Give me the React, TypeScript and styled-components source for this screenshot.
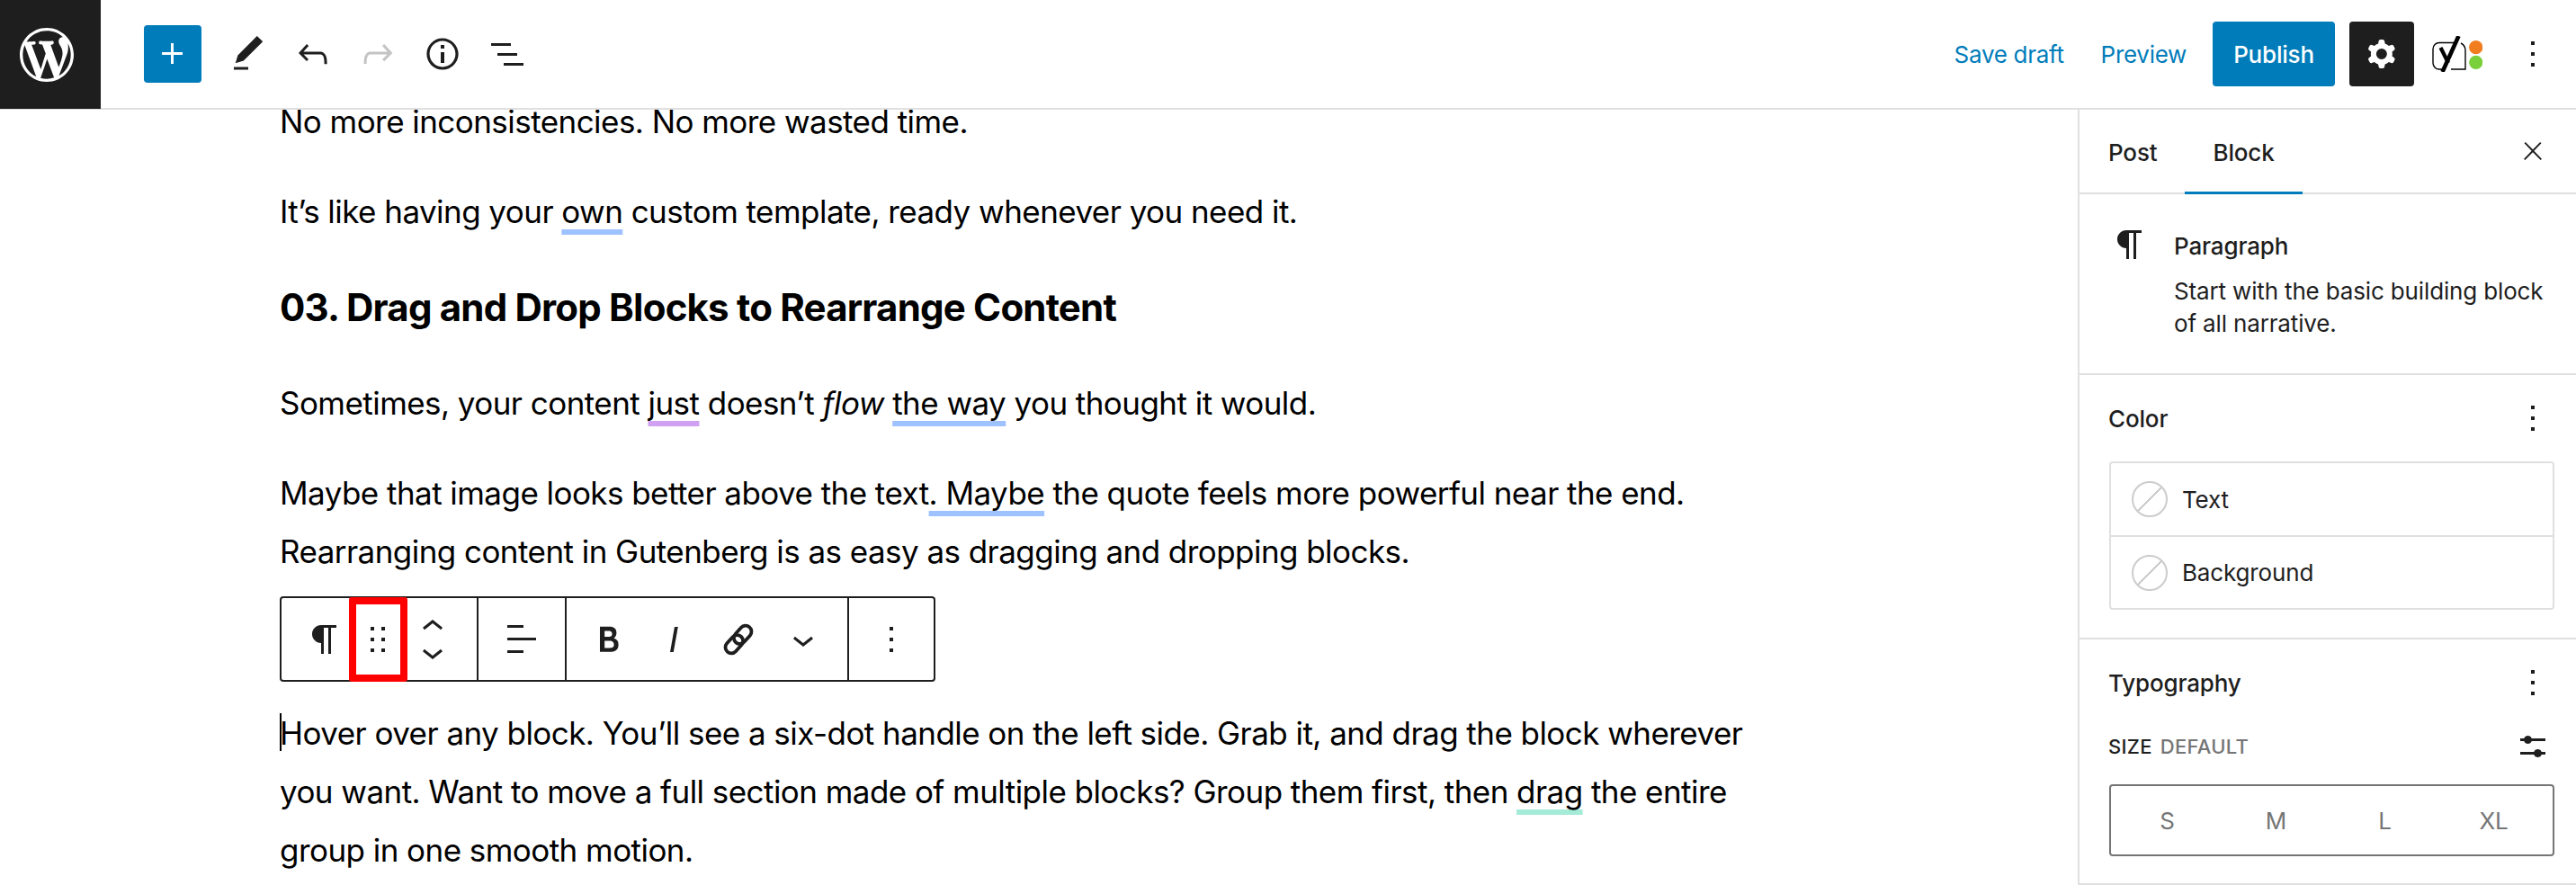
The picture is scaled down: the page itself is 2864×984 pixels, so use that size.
import React from "react";
import styled, { createGlobalStyle } from "styled-components";

const Global = createGlobalStyle`
  html, body { margin: 0; padding: 0; background: #fff; }
  * { box-sizing: border-box; }
  body { font-family: Inter, "Liberation Sans", sans-serif; -webkit-font-smoothing: antialiased; }
`;

const Page = styled.div`
  width: 2864px;
  height: 984px;
  display: flex;
  flex-direction: column;
  overflow: hidden;
  color: #1e1e1e;
`;
const Header = styled.header`
  height: 122px;
  flex: none;
  display: flex;
  align-items: stretch;
  border-bottom: 2px solid #e0e0e0;
`;
const Logo = styled.div`
  width: 112px;
  height: 121px;
  flex: none;
  background: #1e1e1e;
  color: #fff;
  display: flex;
  align-items: center;
  justify-content: center;
  svg { margin-left: -8px; }
`;
const Tools = styled.div`
  display: flex;
  align-items: center;
  padding-left: 48px;
  flex: 1;
`;
const Inserter = styled.button`
  width: 64px;
  height: 64px;
  border: 0;
  border-radius: 4px;
  background: #007cba;
  color: #fff;
  padding: 0;
  display: flex;
  align-items: center;
  justify-content: center;
  margin-right: 16px;
`;
const ToolIcon = styled.span<{ $muted?: boolean }>`
  width: 72px;
  height: 72px;
  display: flex;
  align-items: center;
  justify-content: center;
  color: ${(p) => (p.$muted ? "#c4c4c4" : "#1e1e1e")};
`;
const Actions = styled.div`
  display: flex;
  align-items: center;
  padding-right: 24px;
`;
const LinkBtn = styled.span`
  font-size: 26px;
  letter-spacing: -0.3px;
  color: #007cba;
  margin-right: 41px;
`;
const Publish = styled.button`
  width: 136px;
  height: 72px;
  border: 0;
  border-radius: 4px;
  background: #007cba;
  color: #fff;
  font: 500 26px Inter, sans-serif;
  letter-spacing: -0.2px;
  margin-left: -12px;
  margin-right: 16px;
`;
const Gear = styled.button`
  width: 72px;
  height: 72px;
  border: 0;
  border-radius: 4px;
  background: #1e1e1e;
  color: #fff;
  padding: 0;
  display: flex;
  align-items: center;
  justify-content: center;
  margin-right: 20px;
`;
const Kebab = styled.span`
  display: flex;
  width: 48px;
  height: 48px;
  align-items: center;
  justify-content: center;
  color: #1e1e1e;
`;
const YoastWrap = styled.span`
  display: flex;
  margin-right: 32px;
`;
const Body = styled.div`
  flex: 1;
  display: flex;
  min-height: 0;
`;
const Canvas = styled.main`
  flex: 1;
  overflow: hidden;
  padding-left: 311px;
  color: #000;
`;
const Flow = styled.div`
  width: 1640px;
  margin-top: -19px;
`;
const P = styled.p`
  margin: 0 0 35px;
  font-size: 35px;
  line-height: 65px;
  letter-spacing: -0.55px;
  position: relative;
`;
const H = styled.h3`
  margin: 44px 0 44px;
  font-size: 42px;
  line-height: 60px;
  font-weight: 700;
  letter-spacing: -0.8px;
`;
const Mark = styled.span<{ $c: string }>`
  text-decoration: underline;
  text-decoration-color: ${(p) => p.$c};
  text-decoration-thickness: 6px;
  text-underline-offset: 7px;
  text-decoration-skip-ink: none;
`;
const Caret = styled.span`
  position: absolute;
  left: 0;
  top: 10px;
  width: 2px;
  height: 42px;
  background: #000;
`;
const BlockBar = styled.div`
  position: relative;
  width: 729px;
  height: 95px;
  border: 2px solid #1e1e1e;
  border-radius: 4px;
  display: flex;
  margin: -18px 0 25px;
  background: #fff;
  color: #1e1e1e;
`;
const Group = styled.div<{ $w: number; $pad?: string; $last?: boolean }>`
  width: ${(p) => p.$w}px;
  flex: none;
  display: flex;
  align-items: center;
  padding: ${(p) => p.$pad ?? "0"};
  border-right: ${(p) => (p.$last ? "0" : "2px solid #1e1e1e")};
  justify-content: ${(p) => (p.$pad ? "flex-start" : "center")};
`;
const BarBtn = styled.span<{ $w: number }>`
  width: ${(p) => p.$w}px;
  flex: none;
  display: flex;
  align-items: center;
  justify-content: center;
`;
const ParaBtn = styled(BarBtn)`
  padding-left: 12px;
`;
const Mover = styled.span`
  width: 74px;
  flex: none;
  display: flex;
  flex-direction: column;
  align-items: center;
  svg { display: block; }
  svg + svg { margin-top: -20px; }
`;
const RedBox = styled.span`
  position: absolute;
  left: 75px;
  top: -1px;
  width: 65px;
  height: 94px;
  border: 8px solid #fe0000;
  border-radius: 3px;
  pointer-events: none;
`;
const Sidebar = styled.aside`
  width: 554px;
  flex: none;
  border-left: 2px solid #e0e0e0;
  border-bottom: 2px solid #e0e0e0;
  font-size: 26px;
  letter-spacing: -0.15px;
`;
const Tabs = styled.div`
  height: 94px;
  display: flex;
  align-items: stretch;
  border-bottom: 2px solid #e0e0e0;
  padding-left: 32px;
  position: relative;
`;
const Tab = styled.span<{ $active?: boolean }>`
  display: flex;
  align-items: center;
  font-weight: 500;
  padding: 0 ${(p) => (p.$active ? "31px" : "31px")} 0 ${(p) => (p.$active ? "31px" : "0")};
  height: 94px;
  box-shadow: ${(p) => (p.$active ? "inset 0 -3px 0 #007cba" : "none")};
`;
const CloseBtn = styled.span`
  margin-left: auto;
  width: 48px;
  display: flex;
  align-items: center;
  justify-content: center;
  margin-right: 24px;
`;
const Section = styled.section<{ $h?: number }>`
  height: ${(p) => (p.$h ? `${p.$h}px` : "auto")};
  border-bottom: ${(p) => (p.$h ? "2px solid #e0e0e0" : "0")};
  padding: 24px 24px 0 32px;
`;
const CardSection = styled(Section)`
  padding-top: 32px;
`;
const BlockCard = styled.div`
  display: flex;
`;
const CardIcon = styled.span`
  width: 73px;
  flex: none;
`;
const CardTitle = styled.div`
  font-weight: 500;
  line-height: 36px;
  margin-top: 8px;
  margin-bottom: 14px;
`;
const CardText = styled.div`
  line-height: 36px;
  width: 420px;
`;
const SectionHead = styled.div`
  display: flex;
  align-items: center;
  justify-content: space-between;
  height: 48px;
  font-weight: 500;
`;
const HeadKebab = styled.span`
  display: flex;
`;
const ColorBox = styled.div`
  border: 2px solid #e0e0e0;
  border-radius: 4px;
  margin-top: 24px;
  margin-left: 1px;
  width: 495px;
`;
const ColorRow = styled.div`
  height: 80px;
  display: flex;
  align-items: center;
  padding-left: 23px;
  gap: 16px;
  & + & { border-top: 2px solid #e0e0e0; height: 81px; }
`;
const Swatch = styled.span`
  width: 40px;
  height: 40px;
  border-radius: 50%;
  border: 2px solid #ccc;
  background: linear-gradient(to bottom right, transparent calc(50% - 1px), #ccc calc(50% - 1px), #ccc calc(50% + 1px), transparent calc(50% + 1px));
  flex: none;
`;
const SizeRow = styled.div`
  display: flex;
  align-items: center;
  justify-content: space-between;
  margin-top: 23px;
  height: 48px;
  font-size: 22px;
  font-weight: 500;
  text-transform: uppercase;
`;
const SizeLabel = styled.span`
  display: flex;
  gap: 9px;
  letter-spacing: 0.3px;
`;
const SizeValue = styled.span`
  color: #757575;
`;
const Toggle = styled.div`
  width: 495px;
  height: 80px;
  margin-top: 18px;
  margin-left: 1px;
  border: 2px solid #757575;
  border-radius: 4px;
  display: grid;
  grid-template-columns: repeat(4, 121px);
  padding-left: 2px;
  align-items: center;
  justify-items: center;
  color: #757575;
`;

const Svg = ({ d, size = 48, vb = "0 0 24 24" }: { d: string | string[]; size?: number; vb?: string }) => (
  <svg width={size} height={size} viewBox={vb} fill="currentColor" aria-hidden="true">
    {(Array.isArray(d) ? d : [d]).map((x, i) => (
      <path key={i} d={x} fillRule="evenodd" clipRule="evenodd" />
    ))}
  </svg>
);

const I = {
  wp: "M20 10c0-5.51-4.5-10-10-10C4.48 0 0 4.49 0 10c0 5.52 4.48 10 10 10 5.5 0 10-4.48 10-10zM7.78 15.37L4.37 6.22c.55-.02 1.17-.08 1.17-.08.5-.06.44-1.13-.06-1.11 0 0-1.45.11-2.37.11-.18 0-.37 0-.58-.01C4.12 2.69 6.87 1.11 10 1.11c2.33 0 4.45.87 6.05 2.34-.68-.11-1.65.39-1.65 1.58 0 .74.45 1.36.9 2.1.35.61.55 1.36.55 2.46 0 1.49-1.4 5-1.4 5l-3.03-8.37c.54-.02.82-.17.82-.17.5-.05.44-1.25-.06-1.22 0 0-1.44.12-2.38.12-.87 0-2.33-.12-2.33-.12-.5-.03-.56 1.25-.06 1.22l.92.08 1.26 3.41zM17.41 10c.24-.64.74-1.87.43-4.25.7 1.29 1.05 2.71 1.05 4.25 0 3.29-1.73 6.24-4.4 7.78.97-2.59 1.94-5.2 2.92-7.78zM6.1 18.09C3.12 16.65 1.11 13.53 1.11 10c0-1.3.23-2.48.72-3.59C3.25 10.3 4.67 14.2 6.1 18.09zm4.03-6.63l2.58 6.98c-.86.29-1.76.45-2.71.45-.79 0-1.57-.11-2.29-.33.81-2.38 1.62-4.74 2.42-7.1z",
  plus: "M11 12.5V17.5H12.5V12.5H17.5V11H12.5V6H11V11H6V12.5H11Z",
  pencil: "M20.1 5.1L16.9 2 6.2 12.7l-1.3 4.4 4.5-1.3L20.1 5.1zM4 20.8h8v-1.5H4v1.5z",
  undo: "M18.3 11.7c-.6-.6-1.4-.9-2.3-.9H6.7l2.9-3.3-1.1-1-4.5 5L8.5 16l1-1-2.7-2.7H16c.5 0 .9.2 1.3.5 1 1 1 3.4 1 4.5v.3h1.5v-.2c0-1.5 0-4.3-1.5-5.7z",
  redo: "M15.6 6.5l-1.1 1 2.9 3.3H8c-.9 0-1.7.3-2.3.9-1.4 1.5-1.4 4.2-1.4 5.6v.2h1.5v-.3c0-1.1 0-3.5 1-4.5.3-.3.7-.5 1.3-.5h9.2L14.5 15l1.1 1.1 4.6-4.6-4.6-5z",
  info: "M12 3.2c-4.8 0-8.8 3.9-8.8 8.8 0 4.8 3.9 8.8 8.8 8.8 4.8 0 8.8-3.9 8.8-8.8 0-4.8-4-8.8-8.8-8.8zm0 16c-4 0-7.2-3.3-7.2-7.2C4.8 8 8 4.8 12 4.8s7.2 3.3 7.2 7.2c0 4-3.2 7.2-7.2 7.2zM11 17h2v-6h-2v6zm0-8h2V7h-2v2z",
  list: "M3 6h11v1.5H3V6Zm3.5 5.5h11V13h-11v-1.5ZM21 17H10v1.5h11V17Z",
  para: "m9.99609 14v-.2251l.00391.0001v6.225h1.5v-14.5h2.5v14.5h1.5v-14.5h3v-1.5h-8.50391c-2.76142 0-5 2.23858-5 5 0 2.7614 2.23858 5 5 5z",
  drag: "M8 7h2V5H8v2zm0 6h2v-2H8v2zm0 6h2v-2H8v2zm6-14v2h2V5h-2zm0 8h2v-2h-2v2zm0 6h2v-2h-2v2z",
  up: "M6.5 12.4L12 8l5.5 4.4-.9 1.2L12 10l-4.5 3.6-1-1.2z",
  down: "M17.5 11.6L12 16l-5.5-4.4.9-1.2L12 14l4.5-3.6 1 1.2z",
  align: "M13 5.5H4V4h9v1.5Zm7 7H4V11h16v1.5Zm-7 7H4V18h9v1.5Z",
  bold: "M14.7 11.3c1-.6 1.5-1.6 1.5-3 0-2.3-1.3-3.4-4-3.4H7v14h5.8c1.4 0 2.5-.3 3.3-1 .8-.7 1.2-1.7 1.2-2.9.1-1.9-.8-3.1-2.6-3.7zm-5.1-4h2.3c.6 0 1.1.1 1.4.4.3.3.5.7.5 1.2s-.2 1-.5 1.2c-.3.3-.8.4-1.4.4H9.6V7.3zm4.6 9c-.4.3-1 .4-1.7.4H9.6v-3.9h2.9c.7 0 1.3.2 1.7.6.4.4.6.8.6 1.5s-.2 1.2-.6 1.4z",
  italic: "M12.5 5L10 19h1.9l2.5-14z",
  more: "M13 19h-2v-2h2v2zm0-6h-2v-2h2v2zm0-6h-2V5h2v2z",
  cog: "M10.289 4.836A1 1 0 0 1 11.275 4h1.306a1 1 0 0 1 .987.836l.244 1.466c.787.26 1.503.679 2.108 1.218l1.393-.522a1 1 0 0 1 1.216.437l.653 1.13a1 1 0 0 1-.23 1.273l-1.148.944a6.025 6.025 0 0 1 0 2.435l1.149.946a1 1 0 0 1 .23 1.272l-.653 1.13a1 1 0 0 1-1.216.437l-1.394-.522c-.605.54-1.32.958-2.108 1.218l-.244 1.466a1 1 0 0 1-.987.836h-1.306a1 1 0 0 1-.986-.836l-.244-1.466a5.995 5.995 0 0 1-2.108-1.218l-1.394.522a1 1 0 0 1-1.217-.436l-.653-1.131a1 1 0 0 1 .23-1.272l1.149-.946a6.026 6.026 0 0 1 0-2.435l-1.148-.944a1 1 0 0 1-.23-1.272l.653-1.131a1 1 0 0 1 1.217-.437l1.393.522a5.994 5.994 0 0 1 2.108-1.218l.244-1.466ZM14.929 12a3 3 0 1 1-6 0 3 3 0 0 1 6 0Z",
  close: "M13 11.8l6.1-6.3-1-1-6.1 6.2-6.1-6.2-1 1 6.1 6.3-6.5 6.7 1 1 6.5-6.6 6.5 6.6 1-1z",
  sliders: [
    "m19 7.5h-7.628c-.3089-.87389-1.1423-1.5-2.122-1.5-.97966 0-1.81309.62611-2.12197 1.5h-2.12803v1.5h2.12803c.30888.87389 1.14231 1.5 2.12197 1.5.9797 0 1.8131-.62611 2.122-1.5h7.628z",
    "m19 15h-2.128c-.3089-.8739-1.1423-1.5-2.122-1.5s-1.8131.6261-2.122 1.5h-7.628v1.5h7.628c.3089.8739 1.1423 1.5 2.122 1.5s1.8131-.6261 2.122-1.5h2.128z",
  ],
};

const LinkIcon = () => (
  <svg width="48" height="48" viewBox="0 0 24 24" fill="none" stroke="currentColor" strokeWidth="1.9" aria-hidden="true">
    <g transform="rotate(-48 12 12)">
      <rect x="2.8" y="8.7" width="11.4" height="6.6" rx="3.3" />
      <rect x="9.8" y="8.7" width="11.4" height="6.6" rx="3.3" />
    </g>
  </svg>
);

const Yoast = () => (
  <svg width="56" height="40" viewBox="0 0 56 40" aria-hidden="true">
    <path d="M26 7.5H8a7 7 0 0 0-7 7V30a7 7 0 0 0 7 7h4M21 37h16V16a9 9 0 0 0-5-8" fill="none" stroke="#000" strokeWidth="1.4" />
    <path d="M29.5 0 11.5 40" fill="none" stroke="#000" strokeWidth="4.6" />
    <path d="M9.5 13 18 30" fill="none" stroke="#000" strokeWidth="4.2" />
    <circle cx="48.7" cy="12.7" r="7.6" fill="#f07d1f" />
    <circle cx="48.7" cy="29.3" r="7.6" fill="#7ad03a" />
  </svg>
);

export default function App() {
  return (
    <Page>
      <Global />
      <Header>
        <Logo>
          <Svg d={I.wp} size={60} vb="0 0 20 20" />
        </Logo>
        <Tools>
          <Inserter><Svg d={I.plus} /></Inserter>
          <ToolIcon><Svg d={I.pencil} /></ToolIcon>
          <ToolIcon><Svg d={I.undo} /></ToolIcon>
          <ToolIcon $muted><Svg d={I.redo} /></ToolIcon>
          <ToolIcon><Svg d={I.info} /></ToolIcon>
          <ToolIcon><Svg d={I.list} /></ToolIcon>
        </Tools>
        <Actions>
          <LinkBtn>Save draft</LinkBtn>
          <LinkBtn>Preview</LinkBtn>
          <Publish>Publish</Publish>
          <Gear><Svg d={I.cog} /></Gear>
          <YoastWrap><Yoast /></YoastWrap>
          <Kebab><Svg d={I.more} /></Kebab>
        </Actions>
      </Header>
      <Body>
        <Canvas>
          <Flow>
            <P>No more inconsistencies. No more wasted time.</P>
            <P>It’s like having your <Mark $c="#9ec2ff">own</Mark> custom template, ready whenever you need it.</P>
            <H>03. Drag and Drop Blocks to Rearrange Content</H>
            <P>Sometimes, your content <Mark $c="#d0a0f2">just</Mark> doesn’t <em>flow</em> <Mark $c="#9ec2ff">the way</Mark> you thought it would.</P>
            <P>Maybe that image looks better above the text<Mark $c="#9ec2ff">. Maybe</Mark> the quote feels more powerful near the end. Rearranging content in Gutenberg is as easy as dragging and dropping blocks.</P>
            <BlockBar>
              <Group $w={219} $pad="0 0 0 0">
                <ParaBtn $w={83}><Svg d={I.para} /></ParaBtn>
                <BarBtn $w={48}><Svg d={I.drag} /></BarBtn>
                <Mover><Svg d={I.up} /><Svg d={I.down} /></Mover>
              </Group>
              <Group $w={98}><Svg d={I.align} /></Group>
              <Group $w={314} $pad="0 0 0 11px">
                <BarBtn $w={72}><Svg d={I.bold} /></BarBtn>
                <BarBtn $w={72}><Svg d={I.italic} /></BarBtn>
                <BarBtn $w={72}><LinkIcon /></BarBtn>
                <BarBtn $w={72}><Svg d={I.down} /></BarBtn>
              </Group>
              <Group $w={94} $last><Svg d={I.more} /></Group>
              <RedBox />
            </BlockBar>
            <P>
              <Caret />
              Hover over any block. You’ll see a six-dot handle on the left side. Grab it, and drag the block wherever you want. Want to move a full section made of multiple blocks? Group them first, then <Mark $c="#a5ecd8">drag</Mark> the entire group in one smooth motion.
            </P>
          </Flow>
        </Canvas>
        <Sidebar>
          <Tabs>
            <Tab>Post</Tab>
            <Tab $active>Block</Tab>
            <CloseBtn><Svg d={I.close} size={32} /></CloseBtn>
          </Tabs>
          <CardSection $h={201}>
            <BlockCard>
              <CardIcon><Svg d={I.para} /></CardIcon>
              <div>
                <CardTitle>Paragraph</CardTitle>
                <CardText>Start with the basic building block of all narrative.</CardText>
              </div>
            </BlockCard>
          </CardSection>
          <Section $h={294}>
            <SectionHead>Color<HeadKebab><Svg d={I.more} /></HeadKebab></SectionHead>
            <ColorBox>
              <ColorRow><Swatch />Text</ColorRow>
              <ColorRow><Swatch />Background</ColorRow>
            </ColorBox>
          </Section>
          <Section>
            <SectionHead>Typography<HeadKebab><Svg d={I.more} /></HeadKebab></SectionHead>
            <SizeRow>
              <SizeLabel>Size <SizeValue>Default</SizeValue></SizeLabel>
              <HeadKebab><Svg d={I.sliders} /></HeadKebab>
            </SizeRow>
            <Toggle>
              <span>S</span><span>M</span><span>L</span><span>XL</span>
            </Toggle>
          </Section>
        </Sidebar>
      </Body>
    </Page>
  );
}
